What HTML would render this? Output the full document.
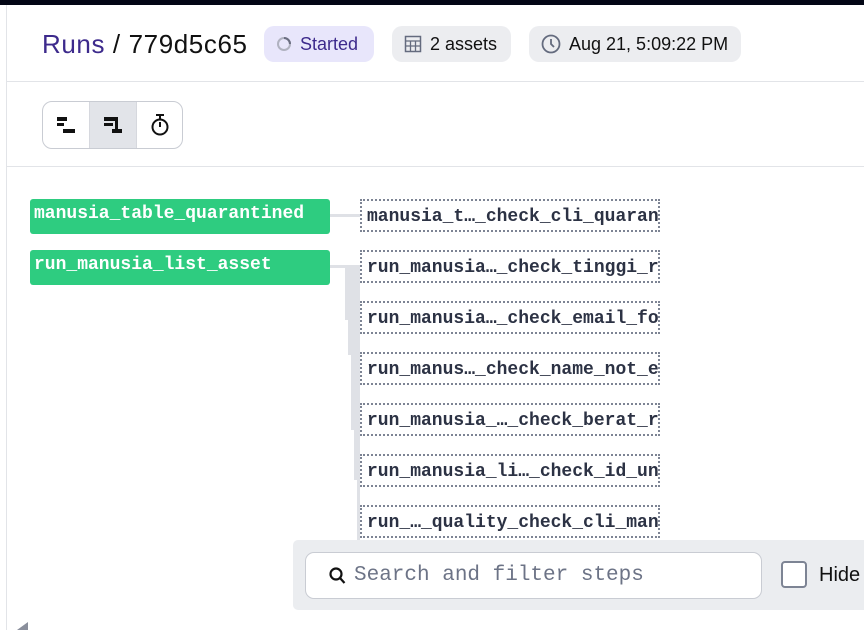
<!DOCTYPE html>
<html><head><style>
*{margin:0;padding:0;box-sizing:border-box}
body{width:864px;height:630px;overflow:hidden;background:#fff;font-family:"Liberation Sans",sans-serif;position:relative}
.abs{position:absolute}
.pill{position:absolute;top:26px;height:36px;border-radius:10px;background:#ecedf0;font-size:18px;color:#111;display:flex;align-items:center;padding:0 12px;gap:8px}
.g{position:absolute;left:30px;width:300px;height:35px;background:#2ecc80;border-radius:3px;color:#fff;font:bold 18px "Liberation Mono",monospace;padding:5px 4px}
.op{position:absolute;left:360px;width:300px;height:33px;border:2px dotted #7d8494;font:bold 18px "Liberation Mono",monospace;color:#2c3244;padding:6px 5px;white-space:nowrap;overflow:hidden;background:#fff}
.ln{position:absolute;background:#dfe1e6}
</style></head><body>
<div class="abs" style="left:0;top:0;width:864px;height:5px;background:#030615"></div>
<div class="abs" style="left:6px;top:5px;width:1px;height:625px;background:#e2e4e8"></div>
<div class="abs" style="left:42px;top:29px;font-size:26px;color:#3d2a8c;letter-spacing:0.6px">Runs <span style="color:#111">/ 779d5c65</span></div>
<div class="pill" style="left:264px;width:110px;background:#e8e6fb;color:#3d2a8c"><svg width="16" height="16"><circle cx="8" cy="8" r="6" fill="none" stroke="#b0b2c0" stroke-width="2"/><path d="M8 2a6 6 0 0 1 6 6" fill="none" stroke="#6a6d80" stroke-width="2"/></svg>Started</div>
<div class="pill" style="left:392px;width:119px"><svg width="18" height="18"><rect x="1.5" y="1.5" width="15" height="15" fill="none" stroke="#646b7e" stroke-width="1.5"/><path d="M1.5 6h15M1.5 11h15M6.5 6v10.5M11.5 6v10.5" stroke="#646b7e" stroke-width="1.3"/></svg>2 assets</div>
<div class="pill" style="left:529px;width:212px"><svg width="20" height="20"><circle cx="10" cy="10" r="8.5" fill="none" stroke="#646b7e" stroke-width="1.8"/><path d="M10 5v5l3 3" fill="none" stroke="#646b7e" stroke-width="1.8"/></svg>Aug 21, 5:09:22 PM</div>
<div class="abs" style="left:7px;top:81px;width:857px;height:1px;background:#e2e4e8"></div>
<div class="abs" style="left:42px;top:101px;width:141px;height:48px;border:1px solid #c9ccd3;border-radius:10px;overflow:hidden;display:flex">
<div style="width:47px;display:flex;align-items:center;justify-content:center;border-right:1px solid #d6d8de"><svg width="22" height="22"><rect x="2" y="3" width="10" height="4" fill="#111"/><rect x="2" y="9" width="7" height="3" fill="#111"/><rect x="8" y="15" width="12" height="4" fill="#111"/></svg></div>
<div style="width:47px;background:#e2e4e9;display:flex;align-items:center;justify-content:center;border-right:1px solid #d6d8de"><svg width="22" height="22"><rect x="2" y="3" width="11" height="4" fill="#111"/><rect x="2" y="9" width="9" height="3" fill="#111"/><rect x="13" y="3" width="3" height="15" fill="#111"/><rect x="10" y="15" width="10" height="4" fill="#111"/></svg></div>
<div style="flex:1;display:flex;align-items:center;justify-content:center"><svg width="22" height="24"><path d="M7 2h8M11 2v4" stroke="#111" stroke-width="2"/><circle cx="11" cy="14" r="7.5" fill="none" stroke="#111" stroke-width="2"/><path d="M11 14V9" stroke="#111" stroke-width="2"/></svg></div>
</div>
<div class="abs" style="left:7px;top:166px;width:857px;height:1px;background:#e2e4e8"></div>
<div class="ln" style="left:330px;top:214px;width:30px;height:3px"></div>
<div class="ln" style="left:330px;top:265px;width:30px;height:3px"></div>
<div class="ln" style="left:345px;top:266px;width:15px;height:54px"></div>
<div class="ln" style="left:348px;top:300px;width:12px;height:55px"></div>
<div class="ln" style="left:351px;top:330px;width:9px;height:100px"></div>
<div class="ln" style="left:354px;top:420px;width:6px;height:60px"></div>
<div class="ln" style="left:357px;top:470px;width:3px;height:80px"></div>
<div class="g" style="top:199px">manusia_table_quarantined</div>
<div class="g" style="top:250px">run_manusia_list_asset</div>
<div class="op" style="top:199px">manusia_t…_check_cli_quaran</div>
<div class="op" style="top:250px">run_manusia…_check_tinggi_r</div>
<div class="op" style="top:301px">run_manusia…_check_email_fo</div>
<div class="op" style="top:352px">run_manus…_check_name_not_e</div>
<div class="op" style="top:403px">run_manusia_…_check_berat_r</div>
<div class="op" style="top:454px">run_manusia_li…_check_id_un</div>
<div class="op" style="top:505px">run_…_quality_check_cli_man</div>
<div class="abs" style="left:293px;top:540px;width:580px;height:70px;background:#ebedf0;border-radius:5px"></div>
<div class="abs" style="left:305px;top:552px;width:457px;height:47px;background:#fff;border:1px solid #c9ccd3;border-radius:9px;display:flex;align-items:center;padding-left:22px;gap:8px;font:21px 'Liberation Mono',monospace;color:#6c7386"><svg width="18" height="20"><circle cx="8" cy="8" r="5.5" fill="none" stroke="#111" stroke-width="2.2"/><path d="M12 12l4.5 5" stroke="#111" stroke-width="2.2"/></svg>Search and filter steps</div>
<div class="abs" style="left:781px;top:561px;width:26px;height:27px;border:2px solid #7d8494;border-radius:4px;background:#fff"></div>
<div class="abs" style="left:819px;top:564px;font-size:20px;color:#111">Hide</div>
<div class="abs" style="left:17px;top:622px;width:0;height:0;border-left:11px solid transparent;border-bottom:8px solid #8a8f9c"></div>
</body></html>
